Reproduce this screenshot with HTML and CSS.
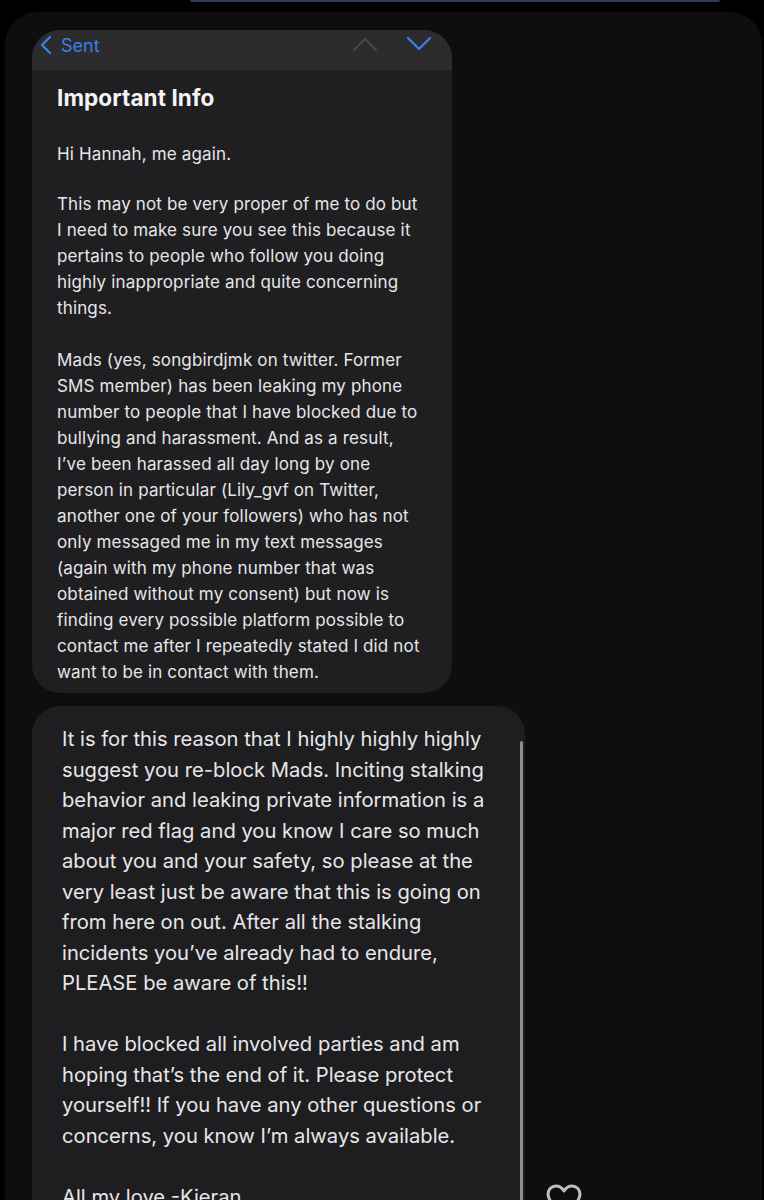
FILE: index.html
```html
<!DOCTYPE html>
<html>
<head>
<meta charset="utf-8">
<link rel="stylesheet" href="styles.css">
</head>
<body>
<div class="topbar"></div>
<div class="panel">
  <div class="mail">
    <div class="mail-head">
      <div class="back">
        <svg width="12" height="20" viewBox="0 0 12 20"><path d="M10 2 L2 10 L10 18" fill="none" stroke="#3b7fe6" stroke-width="2.4" stroke-linecap="round" stroke-linejoin="round"/></svg>
        <span>Sent</span>
      </div>
      <div class="arrows">
        <svg width="26" height="16" viewBox="0 0 26 16"><path d="M2 14 L13 3 L24 14" fill="none" stroke="#48484a" stroke-width="2.2" stroke-linecap="round" stroke-linejoin="round"/></svg>
        <svg width="26" height="16" viewBox="0 0 26 16"><path d="M2 2 L13 13 L24 2" fill="none" stroke="#3b7fe6" stroke-width="2.4" stroke-linecap="round" stroke-linejoin="round"/></svg>
      </div>
    </div>
    <div class="mail-body">
      <h1 class="subject">Important Info</h1>
      <p class="small first">Hi Hannah, me again.</p>
      <p class="small">This may not be very proper of me to do but<br>I need to make sure you see this because it<br>pertains to people who follow you doing<br>highly inappropriate and quite concerning<br>things.</p>
      <p class="small">Mads (yes, songbirdjmk on twitter. Former<br>SMS member) has been leaking my phone<br>number to people that I have blocked due to<br>bullying and harassment. And as a result,<br>I’ve been harassed all day long by one<br>person in particular (Lily_gvf on Twitter,<br>another one of your followers) who has not<br>only messaged me in my text messages<br>(again with my phone number that was<br>obtained without my consent) but now is<br>finding every possible platform possible to<br>contact me after I repeatedly stated I did not<br>want to be in contact with them.</p>
    </div>
  </div>
  <div class="row">
    <div class="bubble">
      <p class="big">It is for this reason that I highly highly highly<br>suggest you re-block Mads. Inciting stalking<br>behavior and leaking private information is a<br>major red flag and you know I care so much<br>about you and your safety, so please at the<br>very least just be aware that this is going on<br>from here on out. After all the stalking<br>incidents you’ve already had to endure,<br>PLEASE be aware of this!!</p>
      <p class="big">I have blocked all involved parties and am<br>hoping that’s the end of it. Please protect<br>yourself!! If you have any other questions or<br>concerns, you know I’m always available.</p>
      <p class="big">All my love -Kieran</p>
      <div class="scroll"></div>
    </div>
    <svg class="heart" width="38" height="34" viewBox="0 0 38 34"><path d="M19 31 C8 23 3 17 3 11 C3 6 7 3 11 3 C15 3 17.5 5.5 19 8 C20.5 5.5 23 3 27 3 C31 3 35 6 35 11 C35 17 30 23 19 31 Z" fill="none" stroke="#bdbdbd" stroke-width="3" stroke-linejoin="round"/></svg>
  </div>
</div>
</body>
</html>
```

FILE: styles.css
```css
html, body {
  margin: 0;
  padding: 0;
  background: #000;
  height: 1200px;
  overflow: hidden;
}
body {
  font-family: Inter, "Liberation Sans", sans-serif;
  color: #e6e6e8;
}
.topbar {
  margin-left: 190px;
  width: 530px;
  height: 2px;
  background: #2e3a5c;
  border-radius: 0 0 4px 4px;
}
.panel {
  margin: 10px 2px 0 5px;
  background: #0e0e10;
  border-radius: 32px 32px 0 0;
  padding: 18px 0 0 27px;
  height: 1300px;
}
.mail {
  width: 420px;
  border-radius: 28px;
  overflow: hidden;
  background: #1f1f21;
}
.mail-head {
  height: 40px;
  background: #2c2c2e;
  display: flex;
  align-items: center;
  justify-content: space-between;
  padding: 0 20px 0 8px;
}
.back {
  display: flex;
  align-items: center;
  gap: 9px;
  color: #3b7fe6;
  font-size: 18px;
  margin-top: -10px;
}
.arrows {
  display: flex;
  gap: 28px;
  margin-top: -12px;
}
.mail-body {
  padding: 13px 20px 8px 25px;
}
.subject {
  margin: 0 0 28px 0;
  font-size: 22.5px;
  font-weight: 700;
  color: #f4f4f6;
  letter-spacing: 0.1px;
  line-height: 30px;
}
.small {
  margin: 0 0 26px 0;
  font-size: 17px;
  line-height: 26px;
  letter-spacing: 0.15px;
  white-space: nowrap;
}
.small.first {
  margin-bottom: 24px;
}
.small:last-child {
  margin-bottom: 0;
}
.row {
  display: flex;
  align-items: flex-end;
  gap: 20px;
  margin-top: 13px;
}
.bubble {
  position: relative;
  width: 493px;
  background: #1e1e20;
  border-radius: 28px;
  padding: 18px 0 20px 30px;
  box-sizing: border-box;
}
.big {
  margin: 0 0 30.5px 0;
  font-size: 20.2px;
  line-height: 30.5px;
  letter-spacing: 0;
  white-space: nowrap;
}
.big:last-of-type {
  margin-bottom: 0;
}
.scroll {
  position: absolute;
  right: 2px;
  top: 35px;
  bottom: 0;
  width: 3px;
  border-radius: 2px;
  background: #8e8e90;
}
.heart {
  margin-bottom: 15px;
}
```
